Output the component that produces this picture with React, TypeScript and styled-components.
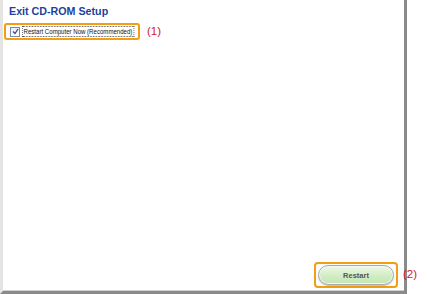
import styled, { createGlobalStyle } from 'styled-components';

const GlobalStyle = createGlobalStyle`
  html, body {
    margin: 0;
    padding: 0;
    background: #ffffff;
  }
  body {
    font-family: "Liberation Sans", Arial, sans-serif;
  }
`;

const Page = styled.div`
  width: 428px;
  height: 294px;
  background: #ffffff;
  display: flex;
`;

const Window = styled.div`
  width: 407px;
  height: 294px;
  box-sizing: border-box;
  background: #ffffff;
  border-left: 3px solid #e4e4e4;
  border-right: 3px solid #8a8a8a;
  border-bottom: 3px solid #8a8a8a;
  box-shadow: inset 0 -1px 0 #d0d0d0;
  display: flex;
  flex-direction: column;
  padding: 5px 0 0 1px;
`;

const Title = styled.h1`
  margin: 0 0 0 5px;
  font-size: 10.7px;
  line-height: 13px;
  font-weight: bold;
  color: #1d3f9e;
`;

const OptionRow = styled.div`
  display: flex;
  align-items: center;
  gap: 7px;
  margin-top: 5px;
`;

const Highlight = styled.div<{ $radius?: number }>`
  display: inline-flex;
  align-items: center;
  border: 2px solid #f29d12;
  border-radius: ${p => p.$radius ?? 3}px;
  box-sizing: border-box;
`;

const CheckHighlight = styled(Highlight)`
  width: 136px;
  height: 17px;
  padding-left: 4px;
  gap: 2px;
  flex-shrink: 0;
`;

const CheckBox = styled.span`
  width: 8px;
  height: 8px;
  flex-shrink: 0;
  border: 1px solid #7a8aa8;
  background: linear-gradient(#e8ecf4, #ffffff);
  display: inline-flex;
  align-items: center;
  justify-content: center;
`;

const Label = styled.span`
  display: inline-block;
  flex-shrink: 0;
  font-size: 7.8px;
  line-height: 9px;
  color: #111;
  border: 1px dotted #555;
  padding: 0 1px;
  white-space: nowrap;
  transform: scaleX(0.78);
  transform-origin: left center;
`;

const Callout = styled.span`
  font-size: 11.5px;
  color: #d11a1a;
  line-height: 13px;
`;

const Spacer = styled.div`
  flex: 1;
`;

const Footer = styled.div`
  display: flex;
  justify-content: flex-end;
  padding: 0 6px 3px 0;
`;

const ButtonHighlight = styled(Highlight)`
  width: 84px;
  height: 26px;
  justify-content: center;
  position: relative;
`;

const RestartButton = styled.button`
  width: 76px;
  height: 20px;
  border-radius: 10px;
  border: 1px solid #a8a8a8;
  background: linear-gradient(#eef8e8, #d2ecc4 55%, #c4e4b2);
  box-shadow: inset 0 0 0 1px #f4fbf0, 0 1px 1px rgba(0, 0, 0, 0.25);
  font-family: "Liberation Sans", Arial, sans-serif;
  font-size: 7.5px;
  font-weight: bold;
  color: #555;
  padding: 0;
  cursor: pointer;
`;

const FloatingCallout = styled(Callout)`
  position: absolute;
  left: 87px;
  top: 4px;
`;

const CheckMark = () => (
  <svg width="7" height="7" viewBox="0 0 7 7">
    <path d="M1 3.5 L3 5.5 L6 1" fill="none" stroke="#3a4a8a" strokeWidth="1.3" />
  </svg>
);

export default function App() {
  return (
    <>
      <GlobalStyle />
      <Page>
        <Window>
          <Title>Exit CD-ROM Setup</Title>
          <OptionRow>
            <CheckHighlight>
              <CheckBox>
                <CheckMark />
              </CheckBox>
              <Label>Restart Computer Now (Recommended)</Label>
            </CheckHighlight>
            <Callout>(1)</Callout>
          </OptionRow>
          <Spacer />
          <Footer>
            <ButtonHighlight $radius={4}>
              <RestartButton>Restart</RestartButton>
              <FloatingCallout>(2)</FloatingCallout>
            </ButtonHighlight>
          </Footer>
        </Window>
      </Page>
    </>
  );
}
